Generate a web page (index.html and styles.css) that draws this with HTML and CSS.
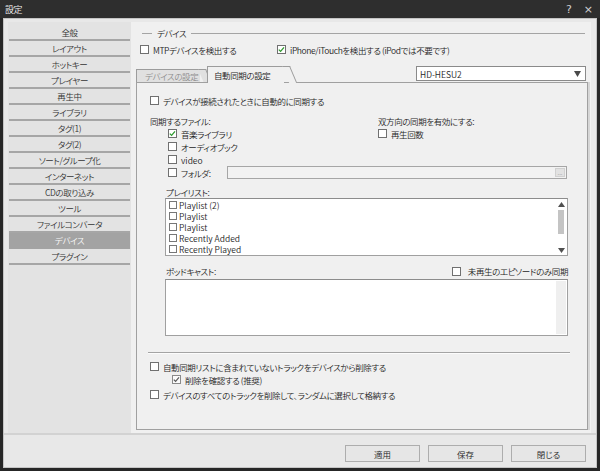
FILE: index.html
```html
<!DOCTYPE html>
<html lang="ja">
<head>
<meta charset="utf-8">
<title>設定</title>
<link rel="stylesheet" href="styles.css">
</head>
<body>
<div class="window">
  <header class="titlebar">
    <span class="title">設定</span>
    <span class="tb-btns"><span>?</span><span>×</span></span>
  </header>
  <div class="frame">
    <div class="main">
      <nav class="nav">
        <div class="nav-item">全般</div>
        <div class="nav-item">レイアウト</div>
        <div class="nav-item">ホットキー</div>
        <div class="nav-item">プレイヤー</div>
        <div class="nav-item">再生中</div>
        <div class="nav-item">ライブラリ</div>
        <div class="nav-item">タグ(1)</div>
        <div class="nav-item">タグ(2)</div>
        <div class="nav-item">ソート/グループ化</div>
        <div class="nav-item">インターネット</div>
        <div class="nav-item">CDの取り込み</div>
        <div class="nav-item">ツール</div>
        <div class="nav-item">ファイルコンバータ</div>
        <div class="nav-item active">デバイス</div>
        <div class="nav-item">プラグイン</div>
      </nav>
      <section class="pane">
        <div class="group-title"><span>デバイス</span></div>
        <div class="detect-row">
          <div class="check"><span class="cb"></span><span>MTPデバイスを検出する</span></div>
          <div class="check"><span class="cb"><svg viewBox="0 0 9 9" width="9" height="9"><path d="M1.8 4.6 L3.6 6.4 L7 2.4" stroke="#2e9a2e" stroke-width="1.3" fill="none"/></svg></span><span>iPhone/iTouchを検出する (iPodでは不要です)</span></div>
        </div>
        <div class="tab-row">
          <div class="tab tab-inactive">デバイスの設定</div>
          <div class="tab tab-active">自動同期の設定</div>
          <div class="select"><span class="latin">HD-HESU2</span><svg class="select-arrow" viewBox="0 0 7 6" width="7" height="6"><path d="M0 0 H7 L3.5 6 Z" fill="#4a4a4a"/></svg></div>
        </div>
        <div class="tab-panel">
          <div class="check row"><span class="cb"></span><span>デバイスが接続されたときに自動的に同期する</span></div>

          <div class="sync-grid">
            <div class="col">
              <div class="label">同期するファイル:</div>
              <div class="check row indent"><span class="cb"><svg viewBox="0 0 9 9" width="9" height="9"><path d="M1.8 4.6 L3.6 6.4 L7 2.4" stroke="#2e9a2e" stroke-width="1.3" fill="none"/></svg></span><span>音楽ライブラリ</span></div>
              <div class="check row indent"><span class="cb"></span><span>オーディオブック</span></div>
              <div class="check row indent"><span class="cb"></span><span class="latin">video</span></div>
            </div>
            <div class="col">
              <div class="label">双方向の同期を有効にする:</div>
              <div class="check row"><span class="cb"></span><span>再生回数</span></div>
            </div>
          </div>

          <div class="folder-row indent">
            <div class="check folder-label"><span class="cb"></span><span>フォルダ:</span></div>
            <div class="field"><span class="field-btn">...</span></div>
          </div>

          <div class="label sub playlist-label">プレイリスト:</div>
          <div class="listbox">
            <div class="list-items">
              <div class="list-item"><span class="cb small"></span><span>Playlist (2)</span></div>
              <div class="list-item"><span class="cb small"></span><span>Playlist</span></div>
              <div class="list-item"><span class="cb small"></span><span>Playlist</span></div>
              <div class="list-item"><span class="cb small"></span><span>Recently Added</span></div>
              <div class="list-item"><span class="cb small"></span><span>Recently Played</span></div>
            </div>
            <div class="scrollbar">
              <svg viewBox="0 0 7 5" width="7" height="5"><path d="M0 5 H7 L3.5 0 Z" fill="#505050"/></svg>
              <div class="thumb"></div>
              <svg viewBox="0 0 7 5" width="7" height="5"><path d="M0 0 H7 L3.5 5 Z" fill="#505050"/></svg>
            </div>
          </div>

          <div class="podcast-row">
            <div class="label sub">ポッドキャスト:</div>
            <div class="check"><span class="cb"></span><span>未再生のエピソードのみ同期</span></div>
          </div>
          <div class="podcast-box"><div class="podcast-track"></div></div>

          <div class="separator"></div>

          <div class="check row"><span class="cb"></span><span>自動同期リストに含まれていないトラックをデバイスから削除する</span></div>
          <div class="check row indent2"><span class="cb dim"><svg viewBox="0 0 9 9" width="9" height="9"><path d="M1.8 4.6 L3.6 6.4 L7 2.4" stroke="#5a5a5a" stroke-width="1.2" fill="none"/></svg></span><span>削除を確認する (推奨)</span></div>
          <div class="check row last"><span class="cb"></span><span>デバイスのすべてのトラックを削除して、ランダムに選択して格納する</span></div>
        </div>
      </section>
    </div>
    <footer class="footer">
      <button class="btn">適用</button>
      <button class="btn">保存</button>
      <button class="btn">閉じる</button>
    </footer>
  </div>
</div>
</body>
</html>
```

FILE: styles.css
```css
* { box-sizing: border-box; }
html, body { margin: 0; padding: 0; }
body {
  width: 600px;
  height: 471px;
  overflow: hidden;
  background: #1d1d1d;
  font-family: "Noto Sans CJK JP", "Noto Sans", sans-serif;
  font-feature-settings: "palt";
  font-size: 8.5px;
  font-weight: 360;
  letter-spacing: -0.4px;
  color: #1e1e1e;
}
.latin { letter-spacing: 0; }
.window {
  width: 600px;
  height: 471px;
  display: flex;
  flex-direction: column;
  background: #262626;
}
.titlebar {
  flex: none;
  height: 18px;
  display: flex;
  align-items: center;
  justify-content: space-between;
  padding: 0 7px 0 5px;
  background: #2e2e2e;
  color: #f2f2f2;
  font-size: 9px;
}
.tb-btns {
  display: flex;
  gap: 12px;
  color: #d0d0d0;
  font-family: "DejaVu Sans", sans-serif;
  font-size: 11px;
  letter-spacing: 0;
}
.frame {
  flex: 1;
  margin: 0 3px 3px 3px;
  background: #e8e8e8;
  border: 1px solid #c4c4c4;
  display: flex;
  flex-direction: column;
  min-height: 0;
}
.main {
  flex: 1;
  display: flex;
  padding: 3px 5px 0 4px;
  min-height: 0;
}
.nav {
  width: 123px;
  flex: none;
  background: #e3e3e3;
  padding: 3px 1px 0 1px;
}
.nav-item {
  height: 16px;
  line-height: 14px;
  text-align: center;
  color: #333;
  border-bottom: 2px solid #a6a6a6;
}
.nav-item.active {
  background: #a3a3a3;
  color: #fafafa;
  border-bottom-color: #a3a3a3;
}
.pane {
  flex: 1;
  display: flex;
  flex-direction: column;
  background: #f0f0f0;
  padding: 5px 3px 3px 5px;
  min-width: 0;
}
.group-title {
  height: 12px;
  margin: 0 3px 0 6px;
  display: flex;
  align-items: center;
}
.group-title::before,
.group-title::after {
  content: "";
  height: 1px;
  background: #a4a4a4;
}
.group-title::before { width: 10px; }
.group-title::after { flex: 1; }
.group-title span { padding: 0 5px; }

.check {
  display: flex;
  align-items: center;
  gap: 4px;
  white-space: nowrap;
}
.cb {
  flex: none;
  width: 9px;
  height: 9px;
  border: 1px solid #707070;
  background: #fff;
  display: flex;
  align-items: center;
  justify-content: center;
}
.cb svg { display: block; flex: none; }
.cb.small { width: 8px; height: 8px; border-color: #777; }
.cb.dim { border-color: #8a8a8a; background: #fbfbfb; }

.detect-row {
  margin-top: 4px;
  height: 13px;
  padding-left: 4px;
  display: grid;
  grid-template-columns: 137px auto;
  align-items: center;
}

.tab-row {
  margin-top: 10px;
  height: 17px;
  display: flex;
  align-items: flex-end;
  margin-bottom: -1px;
}
.tab {
  position: relative;
  border-top: 1px solid #9c9c9c;
  border-left: 1px solid #9c9c9c;
  white-space: nowrap;
}
.tab::after {
  content: "";
  position: absolute;
  top: -1px;
  bottom: 0;
  right: -6px;
  width: 7px;
  background: inherit;
  border-top: 1px solid #9c9c9c;
  border-right: 1px solid #9c9c9c;
  transform: skewX(23deg);
  transform-origin: top left;
}
.tab-inactive {
  z-index: 1;
  width: 64px;
  height: 13px;
  line-height: 12px;
  padding-left: 8px;
  background: #e0e0e0;
  color: #8e8e8e;
  margin-bottom: 1px;
}
.tab-active {
  z-index: 2;
  width: 77px;
  height: 17px;
  line-height: 16px;
  padding-left: 6px;
  background: #f0f0f0;
  margin-left: 7px;
}
.select {
  align-self: flex-start;
  margin-left: auto;
  margin-right: 2px;
  width: 170px;
  height: 15px;
  background: #fff;
  border: 1px solid #8a8a8a;
  display: flex;
  align-items: center;
  justify-content: space-between;
  padding: 0 4px 0 3px;
}

.tab-panel {
  flex: 1;
  border: 1px solid #a0a0a0;
  box-shadow: 2px 0 0 #d6d6d6;
  background: #f0f0f0;
  padding: 11px 19px 0 13px;
  min-height: 0;
}
.row { height: 13px; }
.indent { padding-left: 18px; }
.indent2 { padding-left: 22px; }
.label { height: 12px; line-height: 12px; }
.sub { padding-left: 16px; }

.sync-grid {
  margin-top: 8px;
  display: grid;
  grid-template-columns: 228px 1fr;
}

.folder-row {
  height: 13px;
  display: flex;
  align-items: center;
}
.folder-label { width: 59px; flex: none; }
.field {
  flex: 1;
  height: 13px;
  margin-right: 1px;
  border: 1px solid #a6a6a6;
  background: #f2f2f2;
  display: flex;
  justify-content: flex-end;
  padding: 1px;
}
.field-btn {
  width: 10px;
  background: #e2e2e2;
  border: 1px solid #d0d0d0;
  color: #9a9a9a;
  font-size: 6px;
  line-height: 8px;
  text-align: center;
  letter-spacing: 0;
  overflow: hidden;
}

.playlist-label { margin-top: 7px; }
.listbox {
  margin-left: 15px;
  height: 58px;
  background: #fff;
  border: 1px solid #a0a0a0;
  border-top-color: #8c8c8c;
  display: flex;
}
.list-items { flex: 1; padding-left: 3px; letter-spacing: 0; }
.list-item {
  height: 11.2px;
  display: flex;
  align-items: center;
  gap: 2px;
}
.scrollbar {
  width: 10px;
  margin-right: 1px;
  display: flex;
  flex-direction: column;
  align-items: center;
  padding: 3px 0 2px;
}
.thumb {
  width: 6px;
  height: 24px;
  margin: 3px 0 auto;
  background: #c4c4c4;
}

.podcast-row {
  margin-top: 9px;
  height: 12px;
  display: flex;
  align-items: center;
  justify-content: space-between;
}
.podcast-row .check { gap: 7px; }
.podcast-box {
  margin: 2px 0 0 15px;
  height: 57px;
  background: #fff;
  border: 1px solid #a0a0a0;
  border-top-color: #8c8c8c;
  display: flex;
  justify-content: flex-end;
  padding: 1px 1px 1px 0;
}
.podcast-track { width: 10px; background: #efefef; }

.separator {
  margin: 16px -2px 6px -2px;
  height: 2px;
  border-top: 1px solid #a4a4a4;
  border-bottom: 1px solid #fcfcfc;
}
.row.last { margin-top: 2px; }

.footer {
  flex: none;
  height: 34px;
  border-top: 2px solid #d2d2d2;
  display: flex;
  justify-content: flex-end;
  gap: 8px;
  padding: 10px 10px 0 0;
}
.btn {
  width: 75px;
  height: 17px;
  padding: 0;
  margin: 0;
  background: #e6e6e6;
  border: 1px solid #adadad;
  font: inherit;
  color: #1e1e1e;
}
```
